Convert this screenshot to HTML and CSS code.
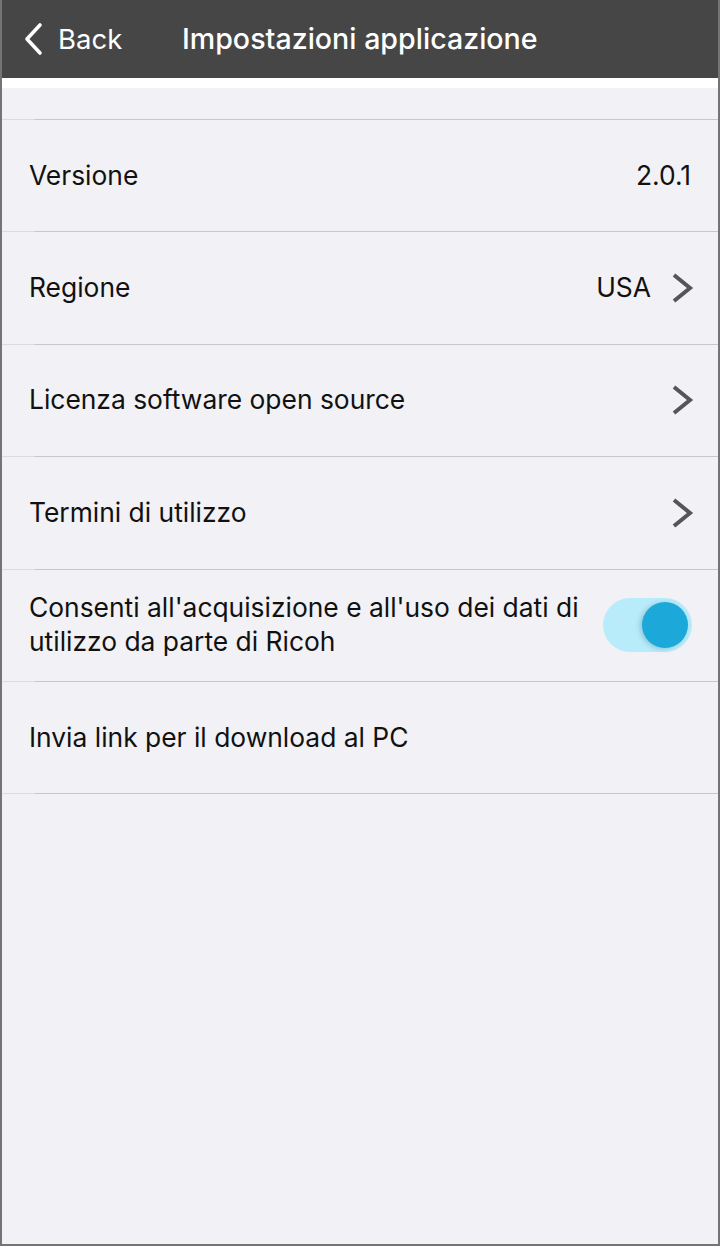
FILE: index.html
```html
<!DOCTYPE html>
<html lang="it">
<head>
<meta charset="utf-8">
<title>Impostazioni applicazione</title>
<link rel="stylesheet" href="styles.css">
</head>
<body>
<div class="frame">
  <header class="navbar">
    <div class="back">
      <svg class="back-icon" width="22" height="34" viewBox="0 0 22 34"><path d="M18 3 L5 17 L18 31" fill="none" stroke="#fff" stroke-width="3.6" stroke-linecap="round" stroke-linejoin="round"/></svg>
      <span class="back-label">Back</span>
    </div>
    <h1 class="title">Impostazioni applicazione</h1>
  </header>
  <div class="strip"></div>
  <div class="spacer"></div>
  <div class="divider"></div>
  <div class="row"><span class="label">Versione</span><span class="value">2.0.1</span></div>
  <div class="divider"></div>
  <div class="row"><span class="label">Regione</span><span class="value with-chev">USA</span>
    <svg class="chev" width="24" height="32" viewBox="0 0 24 32"><path d="M4 3 L20 16 L4 29" fill="none" stroke="#555" stroke-width="4" stroke-linejoin="miter"/></svg></div>
  <div class="divider"></div>
  <div class="row"><span class="label">Licenza software open source</span>
    <svg class="chev" width="24" height="32" viewBox="0 0 24 32"><path d="M4 3 L20 16 L4 29" fill="none" stroke="#555" stroke-width="4" stroke-linejoin="miter"/></svg></div>
  <div class="divider"></div>
  <div class="row"><span class="label">Termini di utilizzo</span>
    <svg class="chev" width="24" height="32" viewBox="0 0 24 32"><path d="M4 3 L20 16 L4 29" fill="none" stroke="#555" stroke-width="4" stroke-linejoin="miter"/></svg></div>
  <div class="divider"></div>
  <div class="row"><span class="label two-line">Consenti all'acquisizione e all'uso dei dati di utilizzo da parte di Ricoh</span>
    <div class="toggle"><div class="knob"></div></div></div>
  <div class="divider"></div>
  <div class="row"><span class="label">Invia link per il download al PC</span></div>
  <div class="divider"></div>
  <div class="rest"></div>
</div>
</body>
</html>
```
FILE: styles.css
```css
html, body {
  margin: 0;
  padding: 0;
  height: 100%;
}
body {
  font-family: Inter, "Noto Sans", "Liberation Sans", sans-serif;
  color: #111;
  background: #f2f1f6;
}
.frame {
  box-sizing: border-box;
  height: 1246px;
  border-left: 2px solid #747474;
  border-right: 2px solid #747474;
  border-bottom: 2px solid #747474;
  display: flex;
  flex-direction: column;
  background: #f2f1f6;
}
.navbar {
  height: 78px;
  background: #464646;
  display: flex;
  align-items: center;
  color: #fff;
  flex: none;
}
.back {
  display: flex;
  align-items: center;
  margin-left: 20px;
  width: 160px;
}
.back-icon { margin-right: 14px; }
.back-label {
  font-size: 27.5px;
  font-weight: 400;
}
.title {
  margin: 0;
  font-size: 28.6px;
  font-weight: 500;
  position: relative;
  top: -1px;
}
.strip {
  height: 10px;
  background: #fff;
  flex: none;
}
.spacer {
  height: 31px;
  flex: none;
}
.divider {
  height: 1px;
  flex: none;
  background: linear-gradient(to right, #dcdce0 33px, #c7c7cb 33px);
}
.row {
  height: 111.4px;
  flex: none;
  display: flex;
  align-items: center;
  padding: 0 27px 0 27px;
  font-size: 26.4px;
}
.label { flex: 1; line-height: 34px; position: relative; top: -1px; }
.two-line { padding-right: 20px; }
.value { position: relative; top: -1px; }
.value.with-chev { margin-right: 19px; }
.chev { margin-right: -3px; }
.toggle {
  width: 89px;
  height: 54px;
  border-radius: 27px;
  background: #b9ecfa;
  position: relative;
  flex: none;
  margin-right: -1px;
}
.knob {
  position: absolute;
  right: 4px;
  top: 4px;
  width: 46px;
  height: 46px;
  border-radius: 50%;
  background: #1ca8d8;
  box-shadow: -2px 1px 5px rgba(0, 80, 120, 0.25);
}
.rest { flex: 1; }
```
